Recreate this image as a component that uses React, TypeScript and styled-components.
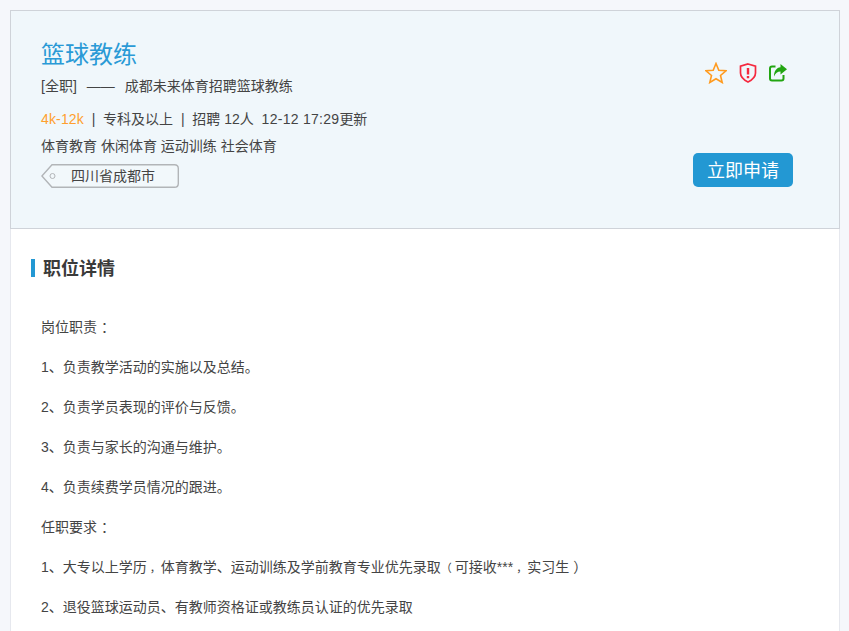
import React from "react";
import styled, { createGlobalStyle } from "styled-components";

const Global = createGlobalStyle`
  html, body { margin: 0; padding: 0; height: 631px; overflow: hidden; background: #f5f7fb; }
  body { font-family: "Liberation Sans", "Noto Sans CJK SC", sans-serif; color: #444; }
`;

const Page = styled.div`
  width: 830px;
  margin-left: 10px;
  padding-top: 10px;
`;

const Header = styled.section`
  box-sizing: border-box;
  height: 219px;
  display: flex;
  justify-content: space-between;
  background: #f0f7fb;
  border: 1px solid #cfd3d9;
  padding: 27px 46px 0 30px;
`;

const Info = styled.div`
  display: flex;
  flex-direction: column;
  align-items: flex-start;
`;

const Title = styled.h1`
  margin: 0;
  font-size: 24px;
  font-weight: 400;
  line-height: 34px;
  color: #2a9ad6;
`;

const Line = styled.p<{ $top: number }>`
  margin: ${(p) => p.$top}px 0 0;
  font-size: 14px;
  line-height: 20px;
  color: #444;
  white-space: pre;
`;

const Dash = styled.span`
  margin: 0 10px;
`;

const Salary = styled.span`
  color: #ff9f2e;
  letter-spacing: 0.15px;
`;

const DateText = styled.span`
  letter-spacing: 0.28px;
`;

const Tag = styled.div`
  position: relative;
  box-sizing: border-box;
  width: 138px;
  height: 24px;
  margin-top: 8px;
  padding-left: 30px;
  font-size: 14px;
  line-height: 24px;
  color: #444;
`;

const TagShape = styled.svg`
  position: absolute;
  left: 0;
  top: 0;
`;

const TagText = styled.span`
  position: relative;
`;

const Side = styled.div`
  display: flex;
  flex-direction: column;
  align-items: flex-end;
  padding-top: 23px;
`;

const Icons = styled.div`
  display: flex;
  align-items: center;
  gap: 12px;
  margin-right: 6px;
  height: 24px;
`;

const Apply = styled.button`
  width: 100px;
  height: 34px;
  margin-top: 68px;
  border: 0;
  border-radius: 5px;
  padding: 0 0 2px;
  background: #2398d3;
  color: #fff;
  font-family: inherit;
  font-size: 18px;
`;

const Details = styled.section`
  box-sizing: border-box;
  background: #fff;
  height: 402px;
  overflow: hidden;
  border-left: 1px solid #e6e8ee;
  border-right: 1px solid #e6e8ee;
  padding: 30px 20px 0;
`;

const SectionTitle = styled.h2`
  margin: 0 0 30px;
  padding-left: 8px;
  border-left: 4px solid #2398d3;
  font-size: 18px;
  font-weight: 700;
  line-height: 20px;
  height: 18px;
  color: #3a3a3a;
`;

const Para = styled.p`
  margin: 0 0 0 10px;
  font-size: 14px;
  line-height: 40px;
  color: #444;
`;

/* Full-width punctuation sits centred in its cell in the reference. */
const LineEndMark = styled.span`
  margin-left: 4px;
`;

const Comma = styled.span`
  font-size: 11px;
  line-height: 1;
  margin-left: 3px;
`;

const OpenParen = styled.span`
  font-size: 11px;
  line-height: 1;
  margin-right: 3px;
`;

const renderLine = (text: string) =>
  text.split(/([：，（）])/).map((part, i) => {
    if (part === "（") return <OpenParen key={i}>{part}</OpenParen>;
    if (part === "，") return <Comma key={i}>{part}</Comma>;
    if (part === "：" || part === "）") return <LineEndMark key={i}>{part}</LineEndMark>;
    return part;
  });

const lines = [
  "岗位职责：",
  "1、负责教学活动的实施以及总结。",
  "2、负责学员表现的评价与反馈。",
  "3、负责与家长的沟通与维护。",
  "4、负责续费学员情况的跟进。",
  "任职要求：",
  "1、大专以上学历，体育教学、运动训练及学前教育专业优先录取（可接收***，实习生）",
  "2、退役篮球运动员、有教师资格证或教练员认证的优先录取",
];

export default function App() {
  return (
    <>
      <Global />
      <Page>
        <Header>
          <Info>
            <Title>篮球教练</Title>
            <Line $top={4}>
              [全职]
              <Dash>——</Dash>
              成都未来体育招聘篮球教练
            </Line>
            <Line $top={13}>
              <Salary>4k-12k</Salary>
              {"  |  专科及以上  |  招聘 12人  "}
              <DateText>12-12 17:29</DateText>更新
            </Line>
            <Line $top={7}>体育教育 休闲体育 运动训练 社会体育</Line>
            <Tag>
              <TagShape width="138" height="24" viewBox="0 0 138 24" aria-hidden="true">
                <path
                  d="M11 .7H133.5Q137.3 .7 137.3 4.5V19.5Q137.3 23.3 133.5 23.3H11L.9 12Z"
                  fill="#f2f8fb"
                  stroke="#b2b5b8"
                  strokeWidth="1.4"
                />
                <circle cx="11.5" cy="12" r="2.5" fill="none" stroke="#b2b5b8" />
              </TagShape>
              <TagText>四川省成都市</TagText>
            </Tag>
          </Info>
          <Side>
            <Icons>
              <svg width="22" height="22" viewBox="0 0 22 22" aria-hidden="true">
                <path
                  d="M11 1.5L13.8 8.2L21 8.8L15.5 13.5L17.2 20.5L11 16.8L4.8 20.5L6.5 13.5L1 8.8L8.2 8.2Z"
                  fill="none"
                  stroke="#ff9b1f"
                  strokeWidth="1.6"
                />
              </svg>
              <svg width="18" height="20" viewBox="0 0 18 20" aria-hidden="true">
                <path
                  d="M9 1L16.5 3.2V10C16.5 14 13 17 9 19C5 17 1.5 14 1.5 10V3.2Z"
                  fill="none"
                  stroke="#f5293f"
                  strokeWidth="1.7"
                />
                <path d="M7.8 5H10.2V11.5H7.8ZM7.8 13H10.2V15.2H7.8Z" fill="#f5293f" />
              </svg>
              <svg width="18" height="18" viewBox="0 0 18 18" aria-hidden="true">
                <path
                  d="M6.5 2.5H3Q1 2.5 1 4.5V14.5Q1 16.5 3 16.5H12.5Q14.5 16.5 14.5 14.5V11"
                  fill="none"
                  stroke="#22a511"
                  strokeWidth="2"
                />
                <path
                  d="M11.5 0L18 5.2L11.5 10.5V7.5C8.5 7.5 6.5 9 5 12.5C5 7 7.5 3.6 11.5 3.2Z"
                  fill="#22a511"
                />
              </svg>
            </Icons>
            <Apply>立即申请</Apply>
          </Side>
        </Header>
        <Details>
          <SectionTitle>职位详情</SectionTitle>
          {lines.map((l) => (
            <Para key={l}>{renderLine(l)}</Para>
          ))}
        </Details>
      </Page>
    </>
  );
}
